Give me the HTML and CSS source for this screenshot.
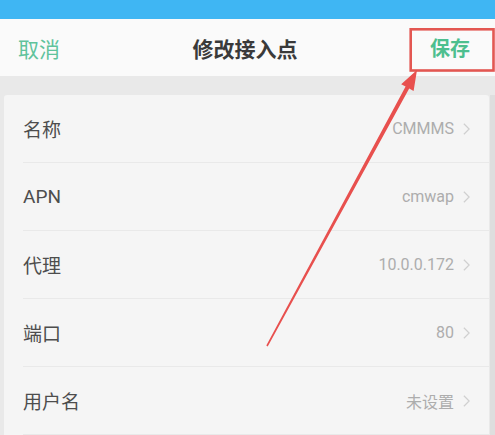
FILE: index.html
```html
<!DOCTYPE html>
<html lang="zh">
<head>
<meta charset="utf-8">
<link rel="stylesheet" href="styles.css">
</head>
<body>
<div class="page">
  <div class="status"></div>
  <div class="header">
    <span class="cancel">取消</span>
    <span class="title">修改接入点</span>
    <span class="save">保存</span>
  </div>
  <div class="content">
    <div class="card">
      <div class="row"><span class="label">名称</span><span class="value">CMMMS</span><svg class="chev" viewBox="0 0 8 14"><path d="M1 1l6 6-6 6"/></svg></div>
      <div class="row"><span class="label">APN</span><span class="value">cmwap</span><svg class="chev" viewBox="0 0 8 14"><path d="M1 1l6 6-6 6"/></svg></div>
      <div class="row"><span class="label">代理</span><span class="value">10.0.0.172</span><svg class="chev" viewBox="0 0 8 14"><path d="M1 1l6 6-6 6"/></svg></div>
      <div class="row"><span class="label">端口</span><span class="value">80</span><svg class="chev" viewBox="0 0 8 14"><path d="M1 1l6 6-6 6"/></svg></div>
      <div class="row"><span class="label">用户名</span><span class="value">未设置</span><svg class="chev" viewBox="0 0 8 14"><path d="M1 1l6 6-6 6"/></svg></div>
    </div>
    <div class="scroll"></div>
  </div>
  <svg class="overlay" viewBox="0 0 495 435" width="495" height="435">
    <rect x="410.7" y="29.3" width="82.8" height="41.2" fill="none" stroke="#e35752" stroke-width="2.6"/>
    <polygon fill="#e8504e" points="267.7,346.4 409.2,88.6 413.6,90.9 417,70 401.2,84.3 405.6,86.6 266.3,345.6"/>
  </svg>
</div>
</body>
</html>
```
FILE: styles.css
```css
html, body {
  margin: 0;
  padding: 0;
}
body {
  width: 495px;
  height: 435px;
  overflow: hidden;
  background: #e9e9e9;
  font-family: Roboto, "Noto Sans CJK SC", sans-serif;
}
.page {
  position: relative;
  width: 495px;
  height: 435px;
  display: flex;
  flex-direction: column;
}
.status {
  height: 20px;
  background: #3fb6f3;
}
.header {
  height: 58px;
  background: #fafafa;
  display: grid;
  grid-template-columns: 1fr auto 1fr;
  align-items: center;
  padding: 0 25px 0 18px;
  font-size: 21px;
}
.cancel {
  color: #5fc39c;
  justify-self: start;
}
.title {
  color: #3a3a3a;
  font-weight: 600;
  padding-left: 2px;
}
.save {
  color: #4dbf8f;
  font-size: 20px;
  font-weight: 700;
  justify-self: end;
}
.content {
  flex: 1;
  display: flex;
  padding: 19px 0 0 4px;
  gap: 1px;
}
.card {
  flex: 1;
  background: #f5f5f5;
  border-radius: 3px 3px 0 0;
  display: flex;
  flex-direction: column;
}
.scroll {
  width: 5px;
  background: #dedede;
}
.row {
  height: 68px;
  flex: none;
  display: flex;
  align-items: center;
  margin-left: 19px;
  padding-right: 19px;
  border-bottom: 1px solid #e9e9e9;
  box-sizing: border-box;
}
.label {
  flex: 1;
  font-size: 19px;
  color: #4d4d4d;
}
.value {
  font-size: 16px;
  color: #adadad;
  margin-right: 9px;
}
.chev {
  width: 7px;
  height: 14px;
  fill: none;
  stroke: #d0d0d0;
  stroke-width: 1.4;
}
.overlay {
  position: absolute;
  left: 0;
  top: 0;
  pointer-events: none;
}
```
